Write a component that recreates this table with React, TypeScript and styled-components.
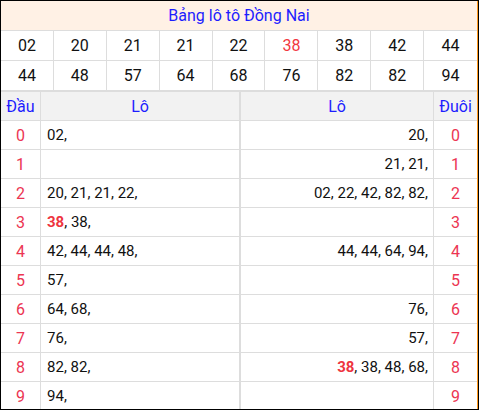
import React from "react";
import styled, { createGlobalStyle } from "styled-components";

const GlobalStyle = createGlobalStyle`
    html, body {
        margin: 0;
        padding: 0;
        background: #fff;
    }
    body {
        font-family: Roboto, "Liberation Sans", Arial, sans-serif;
    }
`;

const Frame = styled.div`
    width: 479px;
    height: 410px;
    box-sizing: border-box;
    border: 1px solid #000;
    overflow: hidden;
`;

const Inner = styled.div`
    border-right: 1px solid #ff9a1f;
    height: 100%;
`;

const Title = styled.div`
    height: 29px;
    display: flex;
    align-items: center;
    justify-content: center;
    background: #fff1e5;
    color: #1d1dff;
    font-size: 16px;
    border-bottom: 1px solid #ddd;
`;

const NumberGrid = styled.div`
    display: grid;
    grid-template-columns: repeat(9, 1fr);
    border-bottom: 2px solid #ddd;
`;

const NumberCell = styled.div<{ $hot?: boolean; $last?: boolean; $bottom?: boolean }>`
    height: 29px;
    display: flex;
    align-items: center;
    justify-content: center;
    font-size: 16px;
    color: ${(p) => (p.$hot ? "#f2383f" : "#111")};
    border-right: ${(p) => (p.$last ? "none" : "1px solid #ddd")};
    border-bottom: ${(p) => (p.$bottom ? "none" : "1px solid #ddd")};
`;

const LotoTable = styled.table`
    width: 100%;
    border-collapse: collapse;
    table-layout: fixed;
`;

const HeadCell = styled.th<{ $w?: string; $thick?: boolean }>`
    width: ${(p) => p.$w || "auto"};
    height: 28px;
    padding: 0;
    background: #f2f2f2;
    color: #1d1dff;
    font-size: 16px;
    font-weight: 400;
    border-bottom: 1px solid #ddd;
    border-right: ${(p) => (p.$thick ? "2px solid #ddd" : "1px solid #ddd")};
    &:last-child {
        border-right: none;
    }
`;

const DigitCell = styled.td`
    height: 28px;
    padding: 0;
    text-align: center;
    color: #ec3552;
    font-size: 16px;
    border-bottom: 1px solid #ddd;
    border-right: 1px solid #ddd;
    &:last-child {
        border-right: none;
    }
`;

const LotoCell = styled.td<{ $right?: boolean; $thick?: boolean }>`
    height: 28px;
    padding: ${(p) => (p.$right ? "0 5px 0 0" : "0 0 0 6px")};
    text-align: ${(p) => (p.$right ? "right" : "left")};
    color: #111;
    font-size: 15px;
    white-space: nowrap;
    border-bottom: 1px solid #ddd;
    border-right: ${(p) => (p.$thick ? "2px solid #ddd" : "1px solid #ddd")};
`;

const Hot = styled.b`
    color: #ee3440;
`;

const numbers = [
    ["02", "20", "21", "21", "22", "38", "38", "42", "44"],
    ["44", "48", "57", "64", "68", "76", "82", "82", "94"],
];

const dau: string[][] = [
    ["02"],
    [],
    ["20", "21", "21", "22"],
    ["38", "38"],
    ["42", "44", "44", "48"],
    ["57"],
    ["64", "68"],
    ["76"],
    ["82", "82"],
    ["94"],
];

const duoi: string[][] = [
    ["20"],
    ["21", "21"],
    ["02", "22", "42", "82", "82"],
    [],
    ["44", "44", "64", "94"],
    [],
    ["76"],
    ["57"],
    ["38", "38", "48", "68"],
    [],
];

const renderList = (list: string[]) =>
    list.map((n, i) => (
        <React.Fragment key={i}>
            {i === 0 && n === "38" ? <Hot>{n}</Hot> : n}
            {","}
            {i < list.length - 1 ? " " : ""}
        </React.Fragment>
    ));

const App = () => {
    return (
        <>
            <GlobalStyle />
            <Frame>
                <Inner>
                    <Title>Bảng lô tô Đồng Nai</Title>
                    <NumberGrid>
                        {numbers.map((row, r) =>
                            row.map((n, c) => (
                                <NumberCell
                                    key={`${r}-${c}`}
                                    $hot={r === 0 && c === 5}
                                    $last={c === 8}
                                    $bottom={r === 1}
                                >
                                    {n}
                                </NumberCell>
                            ))
                        )}
                    </NumberGrid>
                    <LotoTable>
                        <thead>
                            <tr>
                                <HeadCell $w="39px">Đầu</HeadCell>
                                <HeadCell $w="198px" $thick>Lô</HeadCell>
                                <HeadCell $w="192px">Lô</HeadCell>
                                <HeadCell>Đuôi</HeadCell>
                            </tr>
                        </thead>
                        <tbody>
                            {dau.map((list, i) => (
                                <tr key={i}>
                                    <DigitCell>{i}</DigitCell>
                                    <LotoCell $thick>{renderList(list)}</LotoCell>
                                    <LotoCell $right>{renderList(duoi[i])}</LotoCell>
                                    <DigitCell>{i}</DigitCell>
                                </tr>
                            ))}
                        </tbody>
                    </LotoTable>
                </Inner>
            </Frame>
        </>
    );
};

export default App;
